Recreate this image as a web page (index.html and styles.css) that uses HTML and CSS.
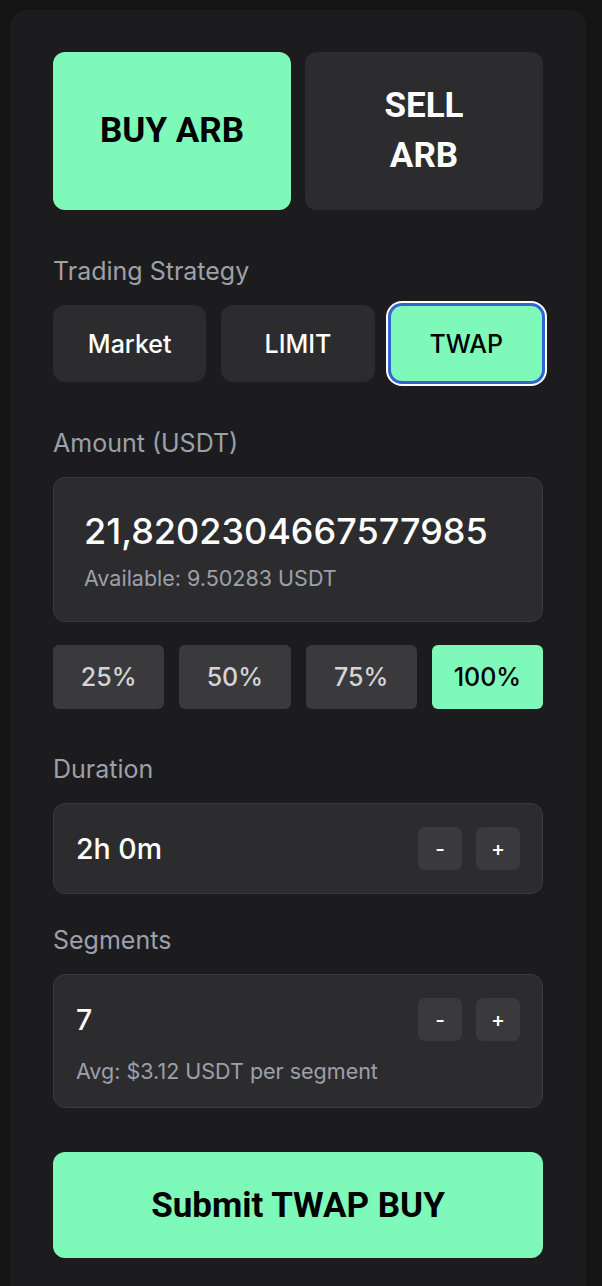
FILE: index.html
```html
<!DOCTYPE html>
<html lang="en">
<head>
<meta charset="utf-8">
<title>TWAP Order</title>
<link rel="stylesheet" href="styles.css">
</head>
<body>
<div class="card">
  <div class="side-row">
    <button class="side-btn active">BUY ARB</button>
    <button class="side-btn">SELL ARB</button>
  </div>

  <section class="section">
    <div class="label">Trading Strategy</div>
    <div class="strategy-row">
      <button class="strategy-btn">Market</button>
      <button class="strategy-btn">LIMIT</button>
      <button class="strategy-btn active">TWAP</button>
    </div>
  </section>

  <section class="section">
    <div class="label">Amount (USDT)</div>
    <div class="amount-box">
      <div class="amount-value">21,8202304667577985</div>
      <div class="hint">Available: 9.50283 USDT</div>
    </div>
    <div class="pct-row">
      <button class="pct-btn">25%</button>
      <button class="pct-btn">50%</button>
      <button class="pct-btn">75%</button>
      <button class="pct-btn active">100%</button>
    </div>
  </section>

  <section class="section section-duration">
    <div class="label">Duration</div>
    <div class="field-box">
      <div class="field-row">
        <span class="field-value">2h 0m</span>
        <div class="stepper">
          <button class="step-btn">-</button>
          <button class="step-btn">+</button>
        </div>
      </div>
    </div>
  </section>

  <section class="section section-tight">
    <div class="label">Segments</div>
    <div class="field-box">
      <div class="field-row">
        <span class="field-value">7</span>
        <div class="stepper">
          <button class="step-btn">-</button>
          <button class="step-btn">+</button>
        </div>
      </div>
      <div class="hint seg-hint">Avg: $3.12 USDT per segment</div>
    </div>
  </section>

  <button class="submit-btn">Submit TWAP BUY</button>
</div>
</body>
</html>
```

FILE: styles.css
```css
* {
  box-sizing: border-box;
}

html, body {
  margin: 0;
  background: #141414;
}

body {
  padding: 10px;
  font-family: Inter, "Noto Sans", sans-serif;
  color: #ffffff;
}

button {
  font-family: inherit;
  border: none;
  cursor: pointer;
  margin: 0;
}

.card {
  width: 576px;
  min-height: 1300px;
  background: #1c1c1e;
  border-radius: 16px;
  padding: 42px 43px 42px;
}

.side-row {
  display: grid;
  grid-template-columns: 1fr 1fr;
  gap: 14px;
}

.side-btn {
  height: 158px;
  border-radius: 12px;
  background: #2c2c2e;
  color: #ffffff;
  font-family: Roboto, "Liberation Sans", sans-serif;
  font-weight: 700;
  font-size: 35px;
  line-height: 50px;
  padding: 0 44px;
}

.side-btn.active {
  background: #7ef9b9;
  color: #000000;
}

.section {
  margin-top: 43px;
}

.section-duration {
  margin-top: 42px;
}

.section-tight {
  margin-top: 28px;
}

.label {
  font-size: 25px;
  line-height: 37px;
  color: #9ca0a9;
  margin-bottom: 15px;
}

.strategy-row {
  display: grid;
  grid-template-columns: repeat(3, 1fr);
  gap: 15px;
}

.strategy-btn {
  height: 77px;
  border-radius: 12px;
  background: #2c2c2e;
  color: #ffffff;
  font-size: 25px;
  font-weight: 500;
}

.strategy-btn.active {
  background: #7ef9b9;
  color: #000000;
  outline: 3px solid #3363d3;
  outline-offset: -1px;
  box-shadow: 0 0 0 4px #ffffff;
}

.amount-box {
  background: #2c2c2e;
  border: 1px solid #3a3a3c;
  border-radius: 12px;
  padding: 32px 30px 27px;
}

.amount-value {
  font-size: 36px;
  line-height: 43px;
  font-weight: 500;
  color: #ffffff;
}

.hint {
  font-size: 21.5px;
  line-height: 31px;
  color: #9ca0a9;
}

.amount-box .hint {
  margin-top: 10px;
}

.pct-row {
  display: grid;
  grid-template-columns: repeat(4, 1fr);
  gap: 15px;
  margin-top: 23px;
}

.pct-btn {
  height: 64px;
  border-radius: 6px;
  background: #3a3a3c;
  color: #d4d4d8;
  font-size: 25px;
  font-weight: 500;
}

.pct-btn.active {
  background: #7ef9b9;
  color: #000000;
}

.field-box {
  background: #2c2c2e;
  border: 1px solid #3a3a3c;
  border-radius: 12px;
  padding: 23px 22px;
}

.field-box .seg-hint {
  margin-top: 15px;
  margin-bottom: -3px;
}

.field-row {
  display: flex;
  align-items: center;
  justify-content: space-between;
  height: 43px;
}

.field-value {
  font-size: 28.5px;
  font-weight: 500;
  color: #ffffff;
}

.stepper {
  display: flex;
  gap: 14px;
}

.step-btn {
  width: 44px;
  height: 43px;
  border-radius: 7px;
  background: #3a3a3c;
  color: #ffffff;
  font-size: 21px;
  font-weight: 500;
  padding: 0;
}

.submit-btn {
  display: block;
  width: 100%;
  height: 106px;
  margin-top: 44px;
  border-radius: 12px;
  background: #7ef9b9;
  color: #000000;
  font-family: Roboto, "Liberation Sans", sans-serif;
  font-weight: 700;
  font-size: 35px;
}
```
